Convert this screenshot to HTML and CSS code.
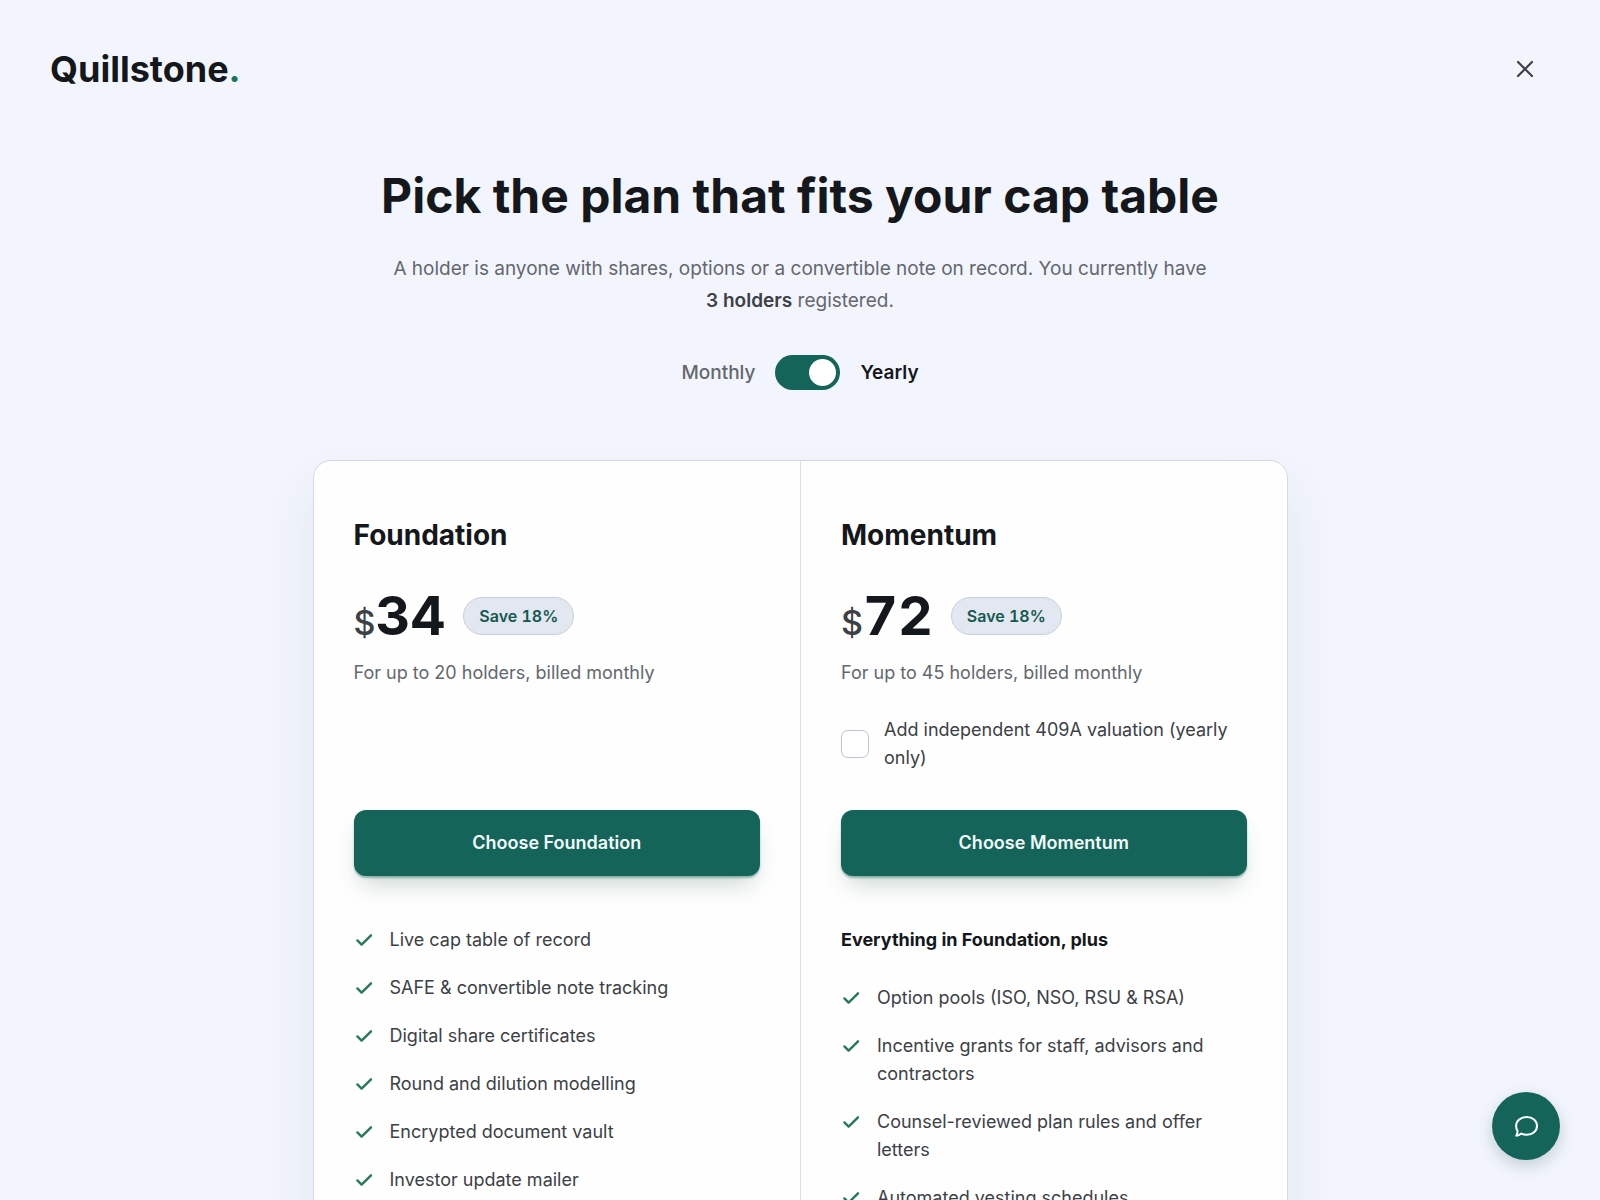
FILE: index.html
```html
<!DOCTYPE html>
<html lang="en">

<head>
    <meta charset="UTF-8">
    <meta name="viewport" content="width=device-width, initial-scale=1.0">
    <title>Quillstone</title>
    <link rel="stylesheet" href="styles.css">
</head>

<body>
    <svg class="symbols" aria-hidden="true">
        <symbol id="check" viewBox="0 0 20 20">
            <path d="M3.4 10.4l4.200 4.200L17 5.300" fill="none" stroke="currentColor" stroke-width="2.400" stroke-linecap="round" stroke-linejoin="round" />
        </symbol>
    </svg>

    <div class="page">
        <header class="topbar">
            <a class="logo" href="#">Quillstone<span class="dot">.</span></a>
            <button class="close" type="button" aria-label="Close">
                <svg width="24" height="24" viewBox="0 0 24 24" fill="none" stroke="currentColor" stroke-width="2.2" stroke-linecap="round">
                    <path d="M5 5l14 14M19 5L5 19" />
                </svg>
            </button>
        </header>

        <main class="pricing">
            <h1>Pick the plan that fits your cap table</h1>
            <p class="intro">A holder is anyone with shares, options or a convertible note on record. You currently have <strong>3 holders</strong> registered.</p>

            <div class="billing">
                <label for="yearly">Monthly</label>
                <input class="switch" id="yearly" type="checkbox" role="switch" checked>
                <label class="active" for="yearly">Yearly</label>
            </div>

            <div class="plans">
                <section class="plan">
                    <h2>Foundation</h2>
                    <div class="price">
                        <span class="currency">$</span><span class="amount">34</span>
                        <span class="badge">Save 18%</span>
                    </div>
                    <p class="limit">For up to 20 holders, billed monthly</p>
                    <div class="addon"></div>
                    <button class="choose" type="button">Choose Foundation</button>
                    <ul class="features">
                        <li><svg><use href="#check" /></svg>Live cap table of record</li>
                        <li><svg><use href="#check" /></svg>SAFE &amp; convertible note tracking</li>
                        <li><svg><use href="#check" /></svg>Digital share certificates</li>
                        <li><svg><use href="#check" /></svg>Round and dilution modelling</li>
                        <li><svg><use href="#check" /></svg>Encrypted document vault</li>
                        <li><svg><use href="#check" /></svg>Investor update mailer</li>
                    </ul>
                </section>

                <section class="plan">
                    <h2>Momentum</h2>
                    <div class="price">
                        <span class="currency">$</span><span class="amount">72</span>
                        <span class="badge">Save 18%</span>
                    </div>
                    <p class="limit">For up to 45 holders, billed monthly</p>
                    <div class="addon">
                        <input id="valuation" type="checkbox">
                        <label for="valuation">Add independent 409A valuation (yearly only)</label>
                    </div>
                    <button class="choose" type="button">Choose Momentum</button>
                    <h3>Everything in Foundation, plus</h3>
                    <ul class="features">
                        <li><svg><use href="#check" /></svg>Option pools (ISO, NSO, RSU &amp; RSA)</li>
                        <li><svg><use href="#check" /></svg>Incentive grants for staff, advisors and contractors</li>
                        <li><svg><use href="#check" /></svg>Counsel-reviewed plan rules and offer letters</li>
                        <li><svg><use href="#check" /></svg>Automated vesting schedules</li>
                    </ul>
                </section>
            </div>
        </main>
    </div>

    <button class="chat" type="button" aria-label="Open chat">
        <svg width="28" height="28" viewBox="0 0 28 28" fill="none" stroke="currentColor" stroke-width="2" stroke-linejoin="round">
            <path d="M14.7 5c5.9 0 10.3 3.9 10.3 8.9s-4.4 8.9-10.3 8.9c-2.1 0-3.9-.4-5.4-1.2-1.3 1.2-3 2.1-5 2.1.9-1.1 1.3-2.7 1.2-4.700-.9-1.400-1.400-3.100-1.400-5.100 0-5 4.700-8.900 10.600-8.900z" />
        </svg>
    </button>
</body>

</html>
```

FILE: styles.css
```css
* {
    box-sizing: border-box;
}

body {
    margin: 0;
    background-color: #f2f5fd;
    color: #3d4045;
    font-family: Inter, "Liberation Sans", sans-serif;
    font-size: 18px;
    line-height: 28px;
}

h1,
h2,
h3,
p,
ul {
    margin: 0;
    padding: 0;
}

button,
input {
    margin: 0;
    font: inherit;
}

button {
    border: none;
    cursor: pointer;
}

.symbols {
    display: none;
}

.page {
    height: 100vh;
    overflow: hidden;
}

.topbar {
    display: flex;
    justify-content: space-between;
    align-items: center;
    padding: 44px 50px 0;
}

.logo {
    color: #14171b;
    font-size: 36px;
    font-weight: 700;
    line-height: 50px;
    text-decoration: none;
}

.dot {
    color: #1c7362;
}

.close {
    display: flex;
    padding: 13px;
    background: none;
    color: #3d4045;
}

.pricing {
    display: flex;
    flex-direction: column;
    align-items: center;
    padding: 70px 24px 0;
    text-align: center;
}

h1 {
    color: #14171b;
    font-size: 48px;
    font-weight: 700;
    line-height: 64px;
}

.intro {
    max-width: 830px;
    margin-top: 25px;
    color: #64676e;
    font-size: 19px;
    line-height: 32px;
}

.intro strong {
    color: #3d4045;
    font-weight: 600;
}

.billing {
    display: flex;
    align-items: center;
    gap: 20px;
    margin-top: 38px;
    color: #64676e;
    font-size: 19px;
    font-weight: 500;
}

.billing .active {
    color: #14171b;
    font-weight: 600;
}

.switch {
    display: flex;
    justify-content: flex-start;
    appearance: none;
    width: 65px;
    height: 35px;
    padding: 4px;
    border-radius: 18px;
    background-color: #9aa1ac;
    cursor: pointer;
}

.switch::before {
    content: "";
    width: 27px;
    height: 27px;
    border-radius: 50%;
    background-color: #fff;
}

.switch:checked {
    justify-content: flex-end;
    background-color: #15645a;
}

.plans {
    display: grid;
    grid-template-columns: 1fr 1fr;
    width: 100%;
    max-width: 975px;
    margin-top: 70px;
    border: 1px solid #d5d9e5;
    border-radius: 18px;
    background-color: #fefefe;
    box-shadow: 0 28px 56px rgba(40, 60, 80, 0.08);
    text-align: left;
}

.plan {
    padding: 54px 40px 60px;
}

.plan + .plan {
    border-left: 1px solid #dcdfe8;
}

h2 {
    color: #14171b;
    font-size: 28px;
    font-weight: 700;
    line-height: 40px;
}

.price {
    display: flex;
    align-items: baseline;
    margin-top: 28px;
    font-variant-numeric: tabular-nums;
    line-height: 66px;
}

.currency {
    font-size: 34px;
    font-weight: 500;
    line-height: 40px;
}

.amount {
    color: #14171b;
    font-size: 54px;
    font-weight: 700;
}

.badge {
    align-self: center;
    margin-left: 18px;
    padding: 4px 15px;
    border: 1px solid #c8d0dc;
    border-radius: 19px;
    background-color: #e2e7f1;
    color: #15584f;
    font-size: 16px;
    font-weight: 600;
    line-height: 28px;
}

.limit {
    margin-top: 10px;
    color: #64676e;
}

.addon {
    display: flex;
    align-items: center;
    gap: 15px;
    height: 56px;
    margin-top: 29px;
}

.addon input {
    flex: none;
    appearance: none;
    width: 28px;
    height: 28px;
    border: 1px solid #c2c2cf;
    border-radius: 7px;
    background-color: #fff;
}

.choose {
    width: 100%;
    margin-top: 38px;
    padding: 19px;
    border-radius: 12px;
    background-color: #15645a;
    box-shadow: 0 2px 2px rgba(21, 100, 90, 0.4), 0 14px 24px -8px rgba(20, 70, 60, 0.25);
    color: #f2fbf9;
    font-weight: 600;
}

h3 {
    margin-top: 50px;
    color: #14171b;
    font-size: 18px;
    font-weight: 700;
}

.features {
    display: flex;
    flex-direction: column;
    gap: 20px;
    margin-top: 50px;
    list-style: none;
}

h3 + .features {
    margin-top: 30px;
}

.features li {
    display: flex;
    gap: 16px;
}

.features svg {
    flex: none;
    width: 20px;
    height: 20px;
    margin-top: 4px;
    color: #26795f;
}

.chat {
    position: fixed;
    right: 40px;
    bottom: 40px;
    display: flex;
    justify-content: center;
    align-items: center;
    width: 68px;
    height: 68px;
    border-radius: 50%;
    background-color: #15645a;
    box-shadow: 0 6px 16px rgba(20, 60, 60, 0.2);
    color: #fff;
}
```
